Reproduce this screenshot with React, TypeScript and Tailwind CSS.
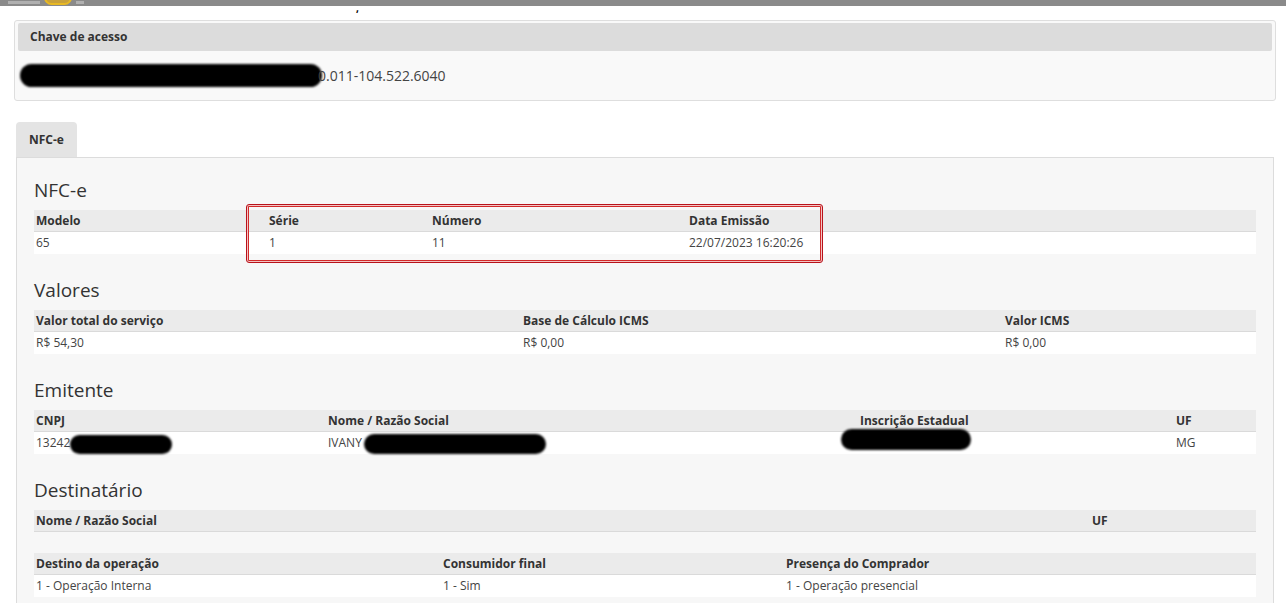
import React from "react"

type Col = { label: string; value?: React.ReactNode }

const Row = ({ cols, grid, empty }: { cols: Col[]; grid: string; empty?: boolean }) => {
  return (
    <div className="w-full">
      <div className={`grid ${grid} h-[22px] items-center border-b border-[#dadada] bg-[#ebebeb] text-[12px] font-bold text-[#333]`}>
        {cols.map((c, i) => (
          <div key={i} className="truncate pl-[2px]">
            {c.label}
          </div>
        ))}
      </div>
      {empty ? (
        <div className="h-[21px]" />
      ) : (
        <div className={`grid ${grid} h-[22px] items-center bg-white text-[12px] text-[#444]`}>
          {cols.map((c, i) => (
            <div key={i} className="relative overflow-visible whitespace-nowrap pl-[2px]">
              {c.value}
            </div>
          ))}
        </div>
      )}
    </div>
  )
}

// mancha preta de ocultação
const Blot = ({ className }: { className: string }) => (
  <span className={`absolute rounded-full bg-black blur-[1px] ${className}`} />
)

const Section = ({ title, children }: { title: string; children: React.ReactNode }) => (
  <div className="mb-[16px]">
    <h4 className="flex h-[40px] items-center text-[19px] font-normal text-[#333]">{title}</h4>
    {children}
  </div>
)

export default function App() {
  return (
    <div className="relative h-[603px] w-[1286px] overflow-hidden bg-white" style={{ fontFamily: '"Open Sans", "Noto Sans", sans-serif' }}>
      {/* barra do topo */}
      <div className="relative h-[6px] w-full bg-[#8a8a8a]">
        <span className="absolute left-[44px] top-[-10px] h-[15px] w-[28px] rounded-full border-2 border-[#e8b923] bg-[#c9a13a]" />
        <span className="absolute left-[8px] top-[1px] h-[3px] w-[32px] bg-[#b0b0b0]" />
        <span className="absolute left-[76px] top-[1px] h-[3px] w-[8px] bg-[#b0b0b0]" />
      </div>
      <span className="absolute left-[356px] top-[1px] text-[10px] font-bold text-black">,</span>

      {/* chave de acesso */}
      <div className="ml-[14px] mr-[10px] mt-[14px] rounded-[3px] border border-[#dedede] bg-[#f9f9f9] px-[3px] pt-[2px]">
        <div className="flex h-[28px] items-center rounded-[2px] bg-[#dcdcdc] px-[12px] text-[12px] font-bold text-[#333]">
          Chave de acesso
        </div>
        <div className="relative flex h-[49px] items-center pl-[300px] text-[14px] text-[#444]">
          <Blot className="left-[2px] top-[13px] h-[23px] w-[302px]" />
          <span className="relative">0.011-104.522.6040</span>
        </div>
      </div>

      {/* aba */}
      <div className="mx-[16px] mt-[21px] flex">
        <div className="flex h-[35px] w-[61px] items-center justify-center rounded-t-[4px] bg-[#e4e4e4] text-[12px] font-bold text-[#333]">
          NFC-e
        </div>
      </div>

      {/* painel */}
      <div className="ml-[16px] mr-[12px] border border-[#dcdcdc] bg-[#f7f7f7] px-[17px] pt-[12px]">
        <Section title="NFC-e">
          <div className="relative">
            <Row
              grid="grid-cols-[233px_163px_257px_1fr]"
              cols={[
                { label: "Modelo", value: "65" },
                { label: "Série", value: "1" },
                { label: "Número", value: "11" },
                { label: "Data Emissão", value: "22/07/2023 16:20:26" },
              ]}
            />
            <div className="absolute left-[212px] top-[-6px] h-[59px] w-[577px] rounded-[3px] border border-[#b8121b] shadow-[inset_0_0_0_1px_#f3c4c4,inset_0_0_0_2px_#d22a2a]" />
          </div>
        </Section>

        <Section title="Valores">
          <Row
            grid="grid-cols-[487px_482px_1fr]"
            cols={[
              { label: "Valor total do serviço", value: "R$ 54,30" },
              { label: "Base de Cálculo ICMS", value: "R$ 0,00" },
              { label: "Valor ICMS", value: "R$ 0,00" },
            ]}
          />
        </Section>

        <Section title="Emitente">
          <Row
            grid="grid-cols-[292px_532px_316px_1fr]"
            cols={[
              {
                label: "CNPJ",
                value: (
                  <>
                    13242
                    <Blot className="left-[36px] top-[1px] h-[19px] w-[102px]" />
                  </>
                ),
              },
              {
                label: "Nome / Razão Social",
                value: (
                  <>
                    IVANY
                    <Blot className="left-[38px] top-[0px] h-[20px] w-[182px]" />
                  </>
                ),
              },
              {
                label: "Inscrição Estadual",
                value: <Blot className="left-[-17px] top-[-14px] h-[21px] w-[130px]" />,
              },
              { label: "UF", value: "MG" },
            ]}
          />
        </Section>

        <div>
          <h4 className="flex h-[40px] items-center text-[19px] font-normal text-[#333]">Destinatário</h4>
          <Row
            empty
            grid="grid-cols-[1056px_1fr]"
            cols={[{ label: "Nome / Razão Social" }, { label: "UF" }]}
          />
          <Row
            grid="grid-cols-[407px_343px_1fr]"
            cols={[
              { label: "Destino da operação", value: "1 - Operação Interna" },
              { label: "Consumidor final", value: "1 - Sim" },
              { label: "Presença do Comprador", value: "1 - Operação presencial" },
            ]}
          />
          <div className="h-[20px]" />
        </div>
      </div>
    </div>
  )
}
